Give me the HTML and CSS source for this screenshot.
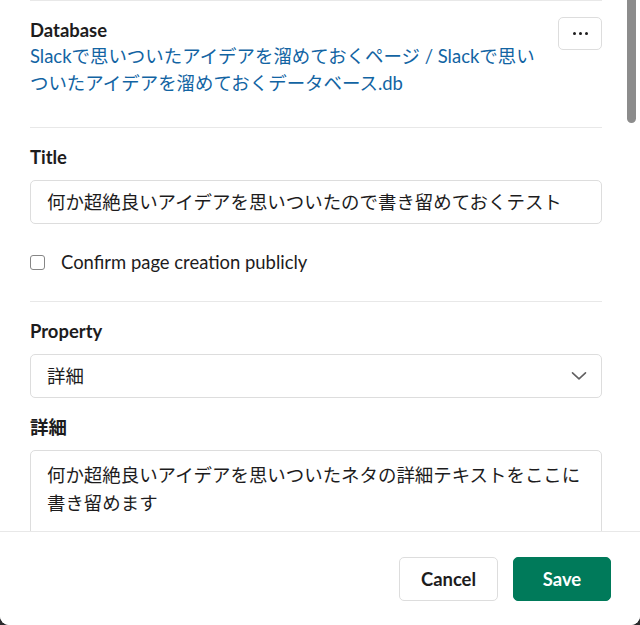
FILE: index.html
```html
<!DOCTYPE html>
<html lang="ja">
<head>
<meta charset="utf-8">
<link rel="stylesheet" href="styles.css">
</head>
<body>
<div class="modal">
  <div class="content">
    <div class="scrollbar"></div>
    <section class="section first">
      <div class="db-row">
        <div class="db-info">
          <div class="label">Database</div>
          <a class="db-link" href="#">Slackで思いついたアイデアを溜めておくページ / Slackで思いついたアイデアを溜めておくデータベース.db</a>
        </div>
        <button class="more" type="button" aria-label="More">
          <span class="dot"></span><span class="dot"></span><span class="dot"></span>
        </button>
      </div>
    </section>
    <section class="section">
      <div class="label">Title</div>
      <div class="field">何か超絶良いアイデアを思いついたので書き留めておくテスト</div>
      <label class="check-row">
        <span class="checkbox"></span>
        <span class="check-text">Confirm page creation publicly</span>
      </label>
    </section>
    <section class="section">
      <div class="label">Property</div>
      <div class="field select">
        <span>詳細</span>
        <svg class="chevron" width="16" height="10" viewBox="0 0 16 10"><path d="M1.5 1.8 L8 7.8 L14.5 1.8" fill="none" stroke="#616061" stroke-width="1.6" stroke-linecap="round" stroke-linejoin="round"/></svg>
      </div>
      <div class="label label-gap">詳細</div>
      <div class="field textarea">何か超絶良いアイデアを思いついたネタの詳細テキストをここに書き留めます</div>
    </section>
  </div>
  <div class="footer">
    <button class="btn cancel" type="button">Cancel</button>
    <button class="btn save" type="button">Save</button>
  </div>
</div>
</body>
</html>
```

FILE: styles.css
```css
* { box-sizing: border-box; }
html, body { margin: 0; padding: 0; }
body {
  background: #2b2b2d;
  font-family: Lato, "Noto Sans CJK JP", sans-serif;
  color: #1d1c1d;
  width: 640px;
  height: 625px;
  overflow: hidden;
}
.modal {
  width: 640px;
  height: 625px;
  background: #ffffff;
  border-radius: 0 0 9px 9px;
  display: flex;
  flex-direction: column;
  overflow: hidden;
}
.content {
  flex: 1;
  position: relative;
  overflow: hidden;
  padding: 0 38px 0 30px;
}
.scrollbar {
  position: absolute;
  top: -10px;
  right: 4px;
  width: 9px;
  height: 133px;
  background: #8c8c8c;
  border-radius: 5px;
}
.section {
  border-top: 1px solid #e8e8e8;
  padding: 17px 0 25px;
}
.section.first { padding-top: 17px; padding-bottom: 30px; }
.db-row { display: flex; align-items: flex-start; }
.db-info { flex: 1; padding-right: 10px; }
.label {
  font-weight: 700;
  font-size: 18.45px;
  line-height: 25px;
  margin-bottom: 10px;
}
.first .label { margin-bottom: 0; }
.label-gap { margin-top: 17px; }
.db-link {
  display: block;
  color: #1264a3;
  text-decoration: none;
  font-size: 18.45px;
  line-height: 27px;
}
.more {
  width: 44px;
  height: 33px;
  margin-top: -1px;
  border: 1px solid #dddddd;
  border-radius: 5px;
  background: #fff;
  display: flex;
  align-items: center;
  justify-content: center;
  gap: 3px;
  padding: 0;
  flex: none;
}
.dot {
  width: 3px;
  height: 3px;
  border-radius: 50%;
  background: #1d1c1d;
}
.field {
  border: 1px solid #dddddd;
  border-radius: 5px;
  height: 44px;
  padding: 0 16px;
  font-size: 18.45px;
  line-height: 42px;
  color: #1d1c1d;
  white-space: nowrap;
  overflow: hidden;
}
.select {
  display: flex;
  align-items: center;
  justify-content: space-between;
  padding-right: 14px;
  height: 44px;
}
.chevron { display: block; }
.textarea {
  height: 120px;
  white-space: normal;
  line-height: 28px;
  padding: 10px 16px;
}
.check-row {
  display: flex;
  align-items: center;
  margin-top: 25px;
  height: 27px;
}
.checkbox {
  width: 15px;
  height: 15px;
  border: 1.5px solid #868686;
  border-radius: 3px;
  margin-right: 16px;
  flex: none;
}
.check-text {
  font-size: 18.45px;
  line-height: 27px;
}
.footer {
  flex: none;
  height: 94px;
  border-top: 1px solid #e8e8e8;
  display: flex;
  justify-content: flex-end;
  align-items: flex-start;
  padding: 25px 29px 0 0;
  gap: 15px;
  background: #fff;
}
.btn {
  height: 44px;
  border-radius: 5px;
  font-family: Lato, "Noto Sans CJK JP", sans-serif;
  font-weight: 700;
  font-size: 18.45px;
  padding: 0;
  cursor: pointer;
}
.cancel {
  width: 99px;
  background: #fff;
  border: 1px solid #dddddd;
  color: #1d1c1d;
}
.save {
  width: 98px;
  background: #007a5a;
  border: 1px solid #007a5a;
  color: #fff;
}
```
